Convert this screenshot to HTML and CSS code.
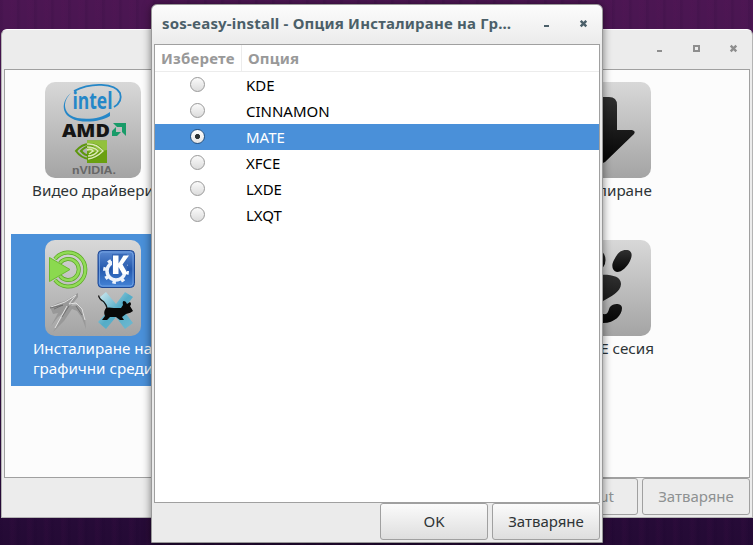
FILE: index.html
```
<!DOCTYPE html>
<html lang="bg">
<head>
<meta charset="utf-8">
<title>sos-easy-install</title>
<link rel="stylesheet" href="styles.css">
</head>
<body>
<main class="desktop">
  <section class="window window-back">
    <header class="titlebar">
      <div class="controls">
        <svg width="9" height="9"><path d="M2 6h5v2H2z"/></svg>
        <svg width="9" height="9"><path fill-rule="evenodd" d="M1 1h7v7H1zM3 3v3h3V3z"/></svg>
        <svg width="9" height="9"><path class="cross" d="M1.700 1.700l5.600 5.600M7.300 1.700L1.700 7.300"/></svg>
      </div>
    </header>
    <div class="icon-view">
      <div class="item">
        <svg class="tile" viewBox="0 0 96 96">
          <path d="M29 9C46 0 70 1 75 11c2 6-1 11-6 14" fill="none" stroke="#2587c8" stroke-width="1.800"/>
          <path d="M29 9c-10 6-12 18-4 24 9 6 30 5 40-3v4c-9 6-29 8-39 2-11-6-9-20 3-27z" fill="#2587c8"/>
          <text class="intel" x="27.500" y="27" textLength="40" lengthAdjust="spacingAndGlyphs">intel</text>
          <text class="amd" x="17" y="54.500" textLength="48" lengthAdjust="spacingAndGlyphs">AMD</text>
          <path d="M68 41h13v13l-4-4v-5h-5zM67 49l4-4v5h5l-4 4h-5z" fill="#199b69"/>
          <path d="M42 58.500h20V81H42z" fill="#6aa010"/><path d="M42 58.500h20V68q-9 3-20 1z" fill="#92c13c"/>
          <path d="M31 69q6-7 13-7 9 0 14 7-6 8-14 8-8-1-13-8zM36 69q8-9 17 0-9 9-17 0z" fill="none" stroke="#5d970d" stroke-width="2"/>
          <path d="M42 62q9-1 16 7-7 7-15 8M42 65q7 0 11 4-4 5-10 5M42 68q4-2 6 1l-4 3" fill="none" stroke="#dce9b5" stroke-width="1.500"/>
          <text class="nvidia" x="27" y="91.500" textLength="44" lengthAdjust="spacingAndGlyphs">nVIDIA.</text>
        </svg>
        <span class="label">Видео драйвери</span>
      </div>
      <div class="item"></div>
      <div class="item">
        <svg class="tile" viewBox="0 0 96 96">
          <defs><linearGradient id="ink" x2="0" y2="1"><stop stop-color="#303030"/><stop offset="1" stop-color="#050505"/></linearGradient></defs>
          <path d="M40 15h14q8 0 8 8v25h15q4 1 2 4L50 80q-3 2-6 0L15 52q-2-3 2-4h15V23q0-8 8-8z" fill="url(#ink)"/>
        </svg>
        <span class="label">Инсталиране</span>
      </div>
      <div class="item item-selected">
        <svg class="tile" viewBox="0 0 96 96">
          <defs><linearGradient id="kde" x2="0" y2="1"><stop stop-color="#5b8ad2"/><stop offset=".5" stop-color="#2458ad"/><stop offset="1" stop-color="#4585d8"/></linearGradient>
          <linearGradient id="xf" x2="1" y2="1"><stop stop-color="#d5edf3"/><stop offset=".5" stop-color="#54acc7"/><stop offset="1" stop-color="#6fb9d0"/></linearGradient></defs>
          <g fill="none" stroke="#58a522" stroke-width="4"><path d="M10 19A17 17 0 1 1 10 40M15 23A10.500 10.500 0 1 1 15 36"/></g>
          <g fill="none" stroke="#91db57" stroke-width="2.600"><path d="M10 19A17 17 0 1 1 10 40M15 23A10.500 10.500 0 1 1 15 36"/></g>
          <path d="M4.500 17.500v24L25 29.500z" fill="#8bd94f" stroke="#6abd2d"/>
          <rect x="53" y="10.500" width="36.500" height="37" rx="4" fill="url(#kde)" stroke="#1e4792"/>
          <rect x="54.500" y="12" width="33.500" height="34" rx="3" fill="none" stroke="#79a7e6" stroke-width=".8"/>
          <circle cx="71" cy="31" r="9" fill="none" stroke="#eef3fb" stroke-width="3.500"/>
          <circle cx="71" cy="31" r="11.500" fill="none" stroke="#eef3fb" stroke-width="3" stroke-dasharray="3.500 5.530"/>
          <path d="M67 14h15v20H67z" fill="#3768b7"/>
          <path d="M68 15.500h5.500v8l5-8H84l-6.500 9L83 34h-5.500l-4-7v7H68z" fill="#fff"/>
          <path d="M5 67l8-4 7-2 13-8v4l-4 5-3 4 7-1 5 6 2 7 1 11-4-11-5-7-5-2-8 12-11 11 12-20-7 5-7 9 7-13-5 1z" fill="#989898"/>
          <path d="M6 67l14-5 11-7-7 9 7-1 6 6 3 11M22 66L10 88" fill="none" stroke="#e0e0e0"/>
          <path d="M5 68l13-3-9 4M24 66l-7 11M31 66l6 9" fill="none" stroke="#666" stroke-width=".8"/>
          <path d="M61 52l10 12 9-12 8 5-10 13 10 13-8 6-9-12-10 12-8-7 11-12-10-12z" fill="url(#xf)"/>
          <path d="M53.500 55.500q1 4 5 6 3 3 4 8" fill="none" stroke="#171717" stroke-width="1.200"/>
          <path d="M61 68q2-1 8 0h7l2-3q-1-4 1-4 2 0 3 3l3-2q2 2 0 4l3 5q-2 2-7 3l-4 3 2 3h-4l-4-3h-6l-3 3h-5l3-4q-2-4 1-8z" fill="#080808"/>
        </svg>
        <span class="label">Инсталиране на<br>графични среди</span>
      </div>
      <div class="item"></div>
      <div class="item">
        <svg class="tile" viewBox="0 0 96 96">
          <g fill="url(#ink)"><path d="M71 10c6 0 7 5 4 11-3 6-8 11-13 11-5-1-6-7-3-12 3-6 6-10 12-10z"/>
          <ellipse cx="43" cy="20" rx="7.500" ry="10"/><ellipse cx="27" cy="30" rx="6" ry="9"/><ellipse cx="15" cy="42" rx="5" ry="8"/>
          <path d="M42 35c14-1 24 1 24 9 0 8-11 13-18 17-5 3-4 10 0 13 6 1 5-4 7-7 3-4 12-4 12 1 0 7-7 15-19 15-20 0-37-43-6-48z"/></g>
        </svg>
        <span class="label">GNOME сесия</span>
      </div>
    </div>
    <footer class="actions"><button class="wide">Logout</button><button>Затваряне</button></footer>
  </section>

  <section class="window window-front">
    <header class="titlebar">
      <h1>sos-easy-install - Опция Инсталиране на Гр…</h1>
      <div class="controls">
        <svg width="9" height="9"><path d="M2 5h5v2H2z"/></svg>
        <svg width="9" height="9"><path class="cross" d="M1.700 .8l5.600 5.600M7.300 .8L1.700 6.400"/></svg>
      </div>
    </header>
    <div class="list">
      <div class="row head"><span>Изберете</span><span>Опция</span></div>
      <div class="row"><i class="radio"></i><span>KDE</span></div>
      <div class="row"><i class="radio"></i><span>CINNAMON</span></div>
      <div class="row row-selected"><i class="radio checked"></i><span>MATE</span></div>
      <div class="row"><i class="radio"></i><span>XFCE</span></div>
      <div class="row"><i class="radio"></i><span>LXDE</span></div>
      <div class="row"><i class="radio"></i><span>LXQT</span></div>
    </div>
    <footer class="actions"><button>OK</button><button>Затваряне</button></footer>
  </section>
</main>
</body>
</html>
```
FILE: styles.css
```
* { box-sizing: border-box; }
body { margin: 0; font: 15px/20px "Noto Sans", sans-serif; color: #2e3436; overflow: hidden; }
.desktop {
  position: relative; width: 753px; height: 545px; overflow: hidden;
  background:
    repeating-linear-gradient(90deg, rgba(20,0,40,.08) 0 2px, transparent 4px 9px, rgba(100,20,90,.07) 11px 13px, transparent 17px),
    linear-gradient(#4c1653, #481650 10%, #270b38 94%, #240a35);
}
.window { position: absolute; display: flex; flex-direction: column; background: #ececec; border-style: solid; border-width: 1px; border-radius: 6px 6px 0 0; }
.window-back { left: 1px; top: 29px; width: 752px; height: 489px; padding: 0 2px 2px; border-color: #fff #b4b4b4 #b4b4b4; }
.window-front { left: 151px; top: 4px; width: 452px; height: 539px; padding: 0 2px 2px; border-color: #999; box-shadow: 0 1px 8px rgba(0,0,0,.5); background: linear-gradient(#fcfcfc, #ebebeb 40px); }
.titlebar { flex: none; height: 39px; display: flex; align-items: center; }
.titlebar h1 { flex: none; margin: 0 0 3px 8px; font-size: 15px; letter-spacing: .2px; font-weight: 700; line-height: 20px; color: #4b5f69; white-space: nowrap; }
.controls { margin-left: auto; padding-right: 12px; display: flex; gap: 28px; fill: #8e8e8e; stroke: #8e8e8e; stroke-width: 0; }
.controls svg { display: block; }
.window-back .controls { margin-bottom: 2px; }
.cross { stroke-width: 2.4; fill: none; }
.window-front .controls { fill: #4b5f69; stroke: #4b5f69; }
.icon-view {
  flex: 1; min-height: 0; border: 1px solid #a0a0a0; background: #fcfcfc; padding: 6px;
  display: grid; grid-template-columns: repeat(3, 164px); grid-auto-rows: 152px; gap: 6px 91px;
}
.item { padding-top: 6px; display: flex; flex-direction: column; align-items: center; }
.item-selected { background: #4a90d9; color: #fff; }
.tile { flex: none; width: 96px; height: 96px; border-radius: 10px; background: linear-gradient(#d8d8d8, #a4a4a4); }
.label { margin-top: 2px; white-space: nowrap; font-size: 15.2px; }
.intel { font: 700 23px "Open Sans", sans-serif; fill: #2587c8; }
.amd { font: 800 17px "Open Sans", sans-serif; fill: #151515; }
.nvidia { font: 700 11px "Liberation Sans", sans-serif; fill: #666; }
.actions { flex: none; height: 37px; display: flex; justify-content: flex-end; gap: 4px; }
button { width: 108px; padding: 0 0 2px; border: 1px solid #a0a0a0; border-radius: 3px; font: inherit; color: #2e3436; background: linear-gradient(#fbfbfb, #dedede); }
.window-back button { color: #8e9192; background: #ececec; }
.window-back .wide { width: 120px; padding-right: 23px; text-align: right; }
.list { flex: 1; min-height: 0; border: 1px solid #a0a0a0; background: #fff; color: #000; }
.row { display: grid; grid-template-columns: 87px 1fr; height: 26px; align-items: center; }
.row span { padding: 0 0 0 4px; }
.head { height: 27px; border-bottom: 1px solid #ececec; font-size: 15px; letter-spacing: .2px; font-weight: 700; color: #999; }
.head span { line-height: 26px; padding: 0 0 0 6px; }
.head span:first-child { border-right: 1px solid #ececec; }
.row-selected { background: #4a90d9; }
.row-selected span { color: #fff; }
.radio { width: 15px; height: 15px; margin: 0 0 2px 35px; border: 1px solid #999; border-radius: 50%; background: linear-gradient(#fafafa, #dcdcdc); }
.checked { border-color: #26507d; background: radial-gradient(circle, #2e3436 2.2px, transparent 2.9px), linear-gradient(#fff, #e4e4e4); }
```
